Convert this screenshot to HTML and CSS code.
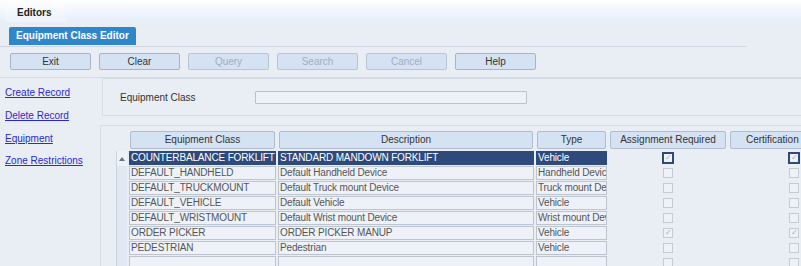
FILE: index.html
```html
<!DOCTYPE html>
<html>
<head>
    <link rel="stylesheet" href="styles.css">
</head>
<body>
    <div class="topbar">
        <div class="top-tab">Editors</div>
    </div>

    <div class="subtabs">
        <div class="editor-tab">Equipment Class Editor</div>
    </div>

    <div class="toolbar">
        <button class="tool-btn">Exit</button>
        <button class="tool-btn">Clear</button>
        <button class="tool-btn disabled">Query</button>
        <button class="tool-btn disabled">Search</button>
        <button class="tool-btn disabled">Cancel</button>
        <button class="tool-btn">Help</button>
    </div>

    <div class="main">
        <div class="sidenav">
            <a href="#">Create Record</a>
            <a href="#">Delete Record</a>
            <a href="#">Equipment</a>
            <a href="#">Zone Restrictions</a>
        </div>

        <div class="content">
            <div class="search-panel">
                <span class="field-label">Equipment Class</span>
                <div class="field-input"></div>
            </div>

            <div class="table-panel">
                <div class="grid">
                    <div class="scroll-head"></div>
                    <div class="col-head">Equipment Class</div>
                    <div class="col-head">Description</div>
                    <div class="col-head">Type</div>
                    <div class="col-head">Assignment Required</div>
                    <div class="col-head">Certification Required</div>

                    <div class="scroll-cell first"><span class="arrow"></span></div>
                    <div class="cell selected">COUNTERBALANCE FORKLIFT</div>
                    <div class="cell selected">STANDARD MANDOWN FORKLIFT</div>
                    <div class="cell selected">Vehicle</div>
                    <div class="check-cell"><span class="box checked focus">&#10003;</span></div>
                    <div class="check-cell"><span class="box checked focus">&#10003;</span></div>

                    <div class="scroll-cell"></div>
                    <div class="cell">DEFAULT_HANDHELD</div>
                    <div class="cell">Default Handheld Device</div>
                    <div class="cell">Handheld Device</div>
                    <div class="check-cell"><span class="box"></span></div>
                    <div class="check-cell"><span class="box"></span></div>

                    <div class="scroll-cell"></div>
                    <div class="cell">DEFAULT_TRUCKMOUNT</div>
                    <div class="cell">Default Truck mount Device</div>
                    <div class="cell">Truck mount Device</div>
                    <div class="check-cell"><span class="box"></span></div>
                    <div class="check-cell"><span class="box"></span></div>

                    <div class="scroll-cell"></div>
                    <div class="cell">DEFAULT_VEHICLE</div>
                    <div class="cell">Default Vehicle</div>
                    <div class="cell">Vehicle</div>
                    <div class="check-cell"><span class="box"></span></div>
                    <div class="check-cell"><span class="box"></span></div>

                    <div class="scroll-cell"></div>
                    <div class="cell">DEFAULT_WRISTMOUNT</div>
                    <div class="cell">Default Wrist mount Device</div>
                    <div class="cell">Wrist mount Device</div>
                    <div class="check-cell"><span class="box"></span></div>
                    <div class="check-cell"><span class="box"></span></div>

                    <div class="scroll-cell"></div>
                    <div class="cell">ORDER PICKER</div>
                    <div class="cell">ORDER PICKER MANUP</div>
                    <div class="cell">Vehicle</div>
                    <div class="check-cell"><span class="box checked">&#10003;</span></div>
                    <div class="check-cell"><span class="box checked">&#10003;</span></div>

                    <div class="scroll-cell"></div>
                    <div class="cell">PEDESTRIAN</div>
                    <div class="cell">Pedestrian</div>
                    <div class="cell">Vehicle</div>
                    <div class="check-cell"><span class="box"></span></div>
                    <div class="check-cell"><span class="box"></span></div>

                    <div class="scroll-cell"></div>
                    <div class="cell"></div>
                    <div class="cell"></div>
                    <div class="cell"></div>
                    <div class="check-cell"><span class="box"></span></div>
                    <div class="check-cell"><span class="box"></span></div>
                </div>
            </div>
        </div>
    </div>
</body>
</html>
```

FILE: styles.css
```css
body {
    margin: 0;
    width: 801px;
    height: 266px;
    overflow: hidden;
    background-color: #e9edf4;
    font-family: "Liberation Sans", Arial, sans-serif;
    font-size: 10px;
    color: #444;
}

.topbar {
    height: 22px;
    background: linear-gradient(#ffffff, #e4eefa);
    padding-left: 5px;
    display: flex;
    align-items: flex-end;
}

.top-tab {
    width: 50px;
    height: 19px;
    padding-left: 12px;
    background: linear-gradient(#fafcff, #eef3fa);
    border-top-right-radius: 14px 19px;
    font-weight: bold;
    font-size: 10px;
    color: #222;
    line-height: 19px;
}

.subtabs {
    padding: 5px 0 0 9px;
    height: 19px;
    border-bottom: 1px solid #cdd6e2;
    margin-right: 55px;
}

.editor-tab {
    display: inline-block;
    height: 18px;
    padding: 0 7px;
    background-color: #2f86c9;
    border-radius: 2px 2px 0 0;
    color: #fff;
    font-weight: bold;
    font-size: 10px;
    line-height: 18px;
}

.toolbar {
    display: flex;
    gap: 8px;
    padding: 6px 0 7px 10px;
    border-bottom: 1px solid #d3dbe6;
}

.tool-btn {
    width: 81px;
    height: 17px;
    padding: 0;
    background-color: #d4e2f3;
    border: 1px solid #a7b4c6;
    border-radius: 2px;
    font-family: "Liberation Sans", Arial, sans-serif;
    font-size: 10px;
    color: #333;
}

.tool-btn.disabled {
    color: #a3adbb;
    border-color: #b9c4d2;
}

.main {
    display: flex;
}

.sidenav {
    width: 95px;
    flex-shrink: 0;
    padding: 8px 0 0 5px;
    display: flex;
    flex-direction: column;
    align-items: flex-start;
    gap: 10px;
}

.sidenav a {
    color: #2a2acf;
    font-size: 10px;
    line-height: 13px;
    white-space: nowrap;
}

.sidenav a:nth-child(3) {
    margin-bottom: -1px;
}

.content {
    flex: 1;
    min-width: 0;
    display: flex;
    flex-direction: column;
    gap: 9px;
}

.search-panel {
    margin-left: 2px;
    height: 36px;
    border: 1px solid #d6dde7;
    border-right: none;
    display: flex;
    align-items: center;
    padding-left: 17px;
}

.field-label {
    width: 135px;
    font-size: 10px;
    color: #333;
}

.field-input {
    width: 270px;
    height: 11px;
    background-color: #eef2f8;
    border: 1px solid #b9c1cd;
    border-radius: 1px;
}

.table-panel {
    height: 140px;
    overflow: hidden;
    border: 1px solid #d6dde7;
    border-right: none;
    border-bottom: none;
    padding: 5px 0 0 15px;
}

.grid {
    display: grid;
    grid-template-columns: 11px 147px 256px 71px 118px 130px;
    grid-template-rows: 19px;
    grid-auto-rows: 14px;
    column-gap: 2px;
    row-gap: 1px;
}

.col-head {
    height: 16px;
    margin: 0 1px;
    background-color: #d4e2f3;
    border: 1px solid #b0bccc;
    border-radius: 2px;
    text-align: center;
    font-size: 10px;
    line-height: 16px;
    color: #333;
    white-space: nowrap;
    overflow: hidden;
}

.scroll-cell {
    background-color: #e2e8f1;
    border-left: 1px solid #c9d1dc;
    margin-bottom: -1px;
}

.scroll-cell.first {
    display: flex;
    justify-content: center;
    align-items: center;
    background-color: #eef2f8;
}

.arrow {
    width: 0;
    height: 0;
    border-left: 3px solid transparent;
    border-right: 3px solid transparent;
    border-bottom: 4px solid #6b7380;
}

.cell {
    background-color: #eef2f8;
    border: 1px solid #bcc4cf;
    padding-left: 1px;
    font-size: 10px;
    letter-spacing: -0.15px;
    line-height: 12px;
    color: #555;
    white-space: nowrap;
    overflow: hidden;
}

.cell.selected {
    background-color: #2d4a7b;
    border-color: #2d4a7b;
    color: #fff;
}

.check-cell {
    display: flex;
    justify-content: center;
    align-items: center;
}

.box {
    width: 8px;
    height: 8px;
    border: 1px solid #c4cbd5;
    background-color: #eef2f8;
    font-size: 8px;
    line-height: 8px;
    text-align: center;
    color: #a6adb8;
}

.box.focus {
    border: 2px solid #2d4a7b;
    width: 8px;
    height: 8px;
}
```
